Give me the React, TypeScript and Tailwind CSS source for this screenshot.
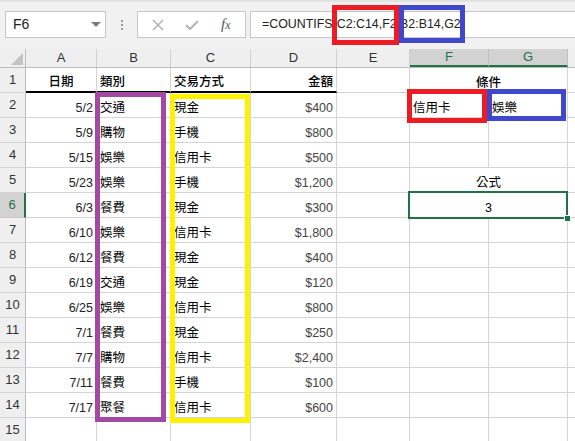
const font = "font-['Liberation_Sans','Noto_Sans_CJK_TC',sans-serif]";

const data = [
  ["5/2", "交通", "現金", "$400"],
  ["5/9", "購物", "手機", "$800"],
  ["5/15", "娛樂", "信用卡", "$500"],
  ["5/23", "娛樂", "手機", "$1,200"],
  ["6/3", "餐費", "現金", "$300"],
  ["6/10", "娛樂", "信用卡", "$1,800"],
  ["6/12", "餐費", "現金", "$400"],
  ["6/19", "交通", "現金", "$120"],
  ["6/25", "娛樂", "信用卡", "$800"],
  ["7/1", "餐費", "現金", "$250"],
  ["7/7", "購物", "信用卡", "$2,400"],
  ["7/11", "餐費", "手機", "$100"],
  ["7/17", "聚餐", "信用卡", "$600"],
];

const cols = [
  { key: "A", w: "w-[71px]" },
  { key: "B", w: "w-[74px]" },
  { key: "C", w: "w-[80px]" },
  { key: "D", w: "w-[86px]" },
  { key: "E", w: "w-[73px]" },
  { key: "F", w: "w-[79px]" },
  { key: "G", w: "w-[79px]" },
];

const cell = "h-[25px] shrink-0 border-r border-b border-[#d4d4d4] flex items-end pb-[3px] px-[3px] leading-none text-[12.5px] whitespace-nowrap";

function RowHead({ n, active }: { n: number; active?: boolean }) {
  return (
    <div
      className={
        active
          ? "h-[25px] w-[26px] shrink-0 bg-[#d2d2d2] border-r-2 border-r-[#217346] border-b border-b-[#c8c8c8] flex items-center justify-center text-[13px] text-[#217346]"
          : "h-[25px] w-[26px] shrink-0 bg-[#efefef] border-r border-r-[#bdbdbd] border-b border-b-[#d4d4d4] flex items-center justify-center text-[13px] text-[#333]"
      }
    >
      {n}
    </div>
  );
}

function FG({ f, g, merged }: { f?: string; g?: string; merged?: boolean }) {
  if (merged) {
    return <div className={`${cell} w-[158px] justify-center`}>{f}</div>;
  }
  return (
    <>
      <div className={`${cell} w-[79px]`}>{f}</div>
      <div className={`${cell} w-[79px]`}>{g}</div>
    </>
  );
}

export default function App() {
  return (
    <div className={`relative w-[575px] h-[441px] overflow-hidden bg-white text-black ${font}`}>
      {/* toolbar */}
      <div className="h-[49px] bg-[#f1f1f1] border-t-2 border-t-[#e2e2e2] pt-[9px] flex items-start">
        <div className="ml-[5px] w-[101px] h-[27px] bg-white border border-[#c6c6c6] flex items-center justify-between pl-[7px] pr-[4px] text-[14px] text-[#222]">
          <span>F6</span>
          <span className="w-0 h-0 border-l-[5px] border-r-[5px] border-t-[5px] border-l-transparent border-r-transparent border-t-[#7a7a7a]" />
        </div>
        <div className="w-[31px] h-[27px] flex flex-col items-center justify-center gap-[2px]">
          <span className="w-[2px] h-[2px] bg-[#9a9a9a]" />
          <span className="w-[2px] h-[2px] bg-[#9a9a9a]" />
          <span className="w-[2px] h-[2px] bg-[#9a9a9a]" />
        </div>
        <div className="w-[109px] h-[27px] bg-white border border-[#c6c6c6] flex items-center">
          <svg className="ml-[14px]" width="12" height="12" viewBox="0 0 12 12">
            <path d="M1 1 L11 11 M11 1 L1 11" stroke="#b4b4b4" strokeWidth="1.6" fill="none" />
          </svg>
          <svg className="ml-[21px]" width="14" height="12" viewBox="0 0 14 12">
            <path d="M1 6 L5 10 L13 2" stroke="#b4b4b4" strokeWidth="2" fill="none" />
          </svg>
          <span className="ml-[22px] text-[15px] italic text-[#555] font-['Liberation_Serif',serif]">
            f<span className="text-[12px]">x</span>
          </span>
        </div>
        <div className="ml-[4px] flex-1 h-[27px] bg-white border border-[#c6c6c6] border-r-0 flex items-center pl-[11px] text-[12.4px] text-[#222]">
          =COUNTIFS(C2:C14,F2,B2:B14,G2)
        </div>
      </div>

      {/* column headers */}
      <div className="flex h-[19px] bg-[#efefef] border-b border-[#bdbdbd]">
        <div className="w-[26px] shrink-0 border-r border-[#bdbdbd] relative">
          <svg className="absolute right-[2px] bottom-[2px]" width="12" height="12" viewBox="0 0 12 12">
            <path d="M12 0 L12 12 L0 12 Z" fill="#c4c4c4" />
          </svg>
        </div>
        {cols.map((c) => {
          const active = c.key === "F" || c.key === "G";
          return (
            <div
              key={c.key}
              className={
                active
                  ? `${c.w} shrink-0 bg-[#d2d2d2] border-r border-r-[#c0c0c0] border-b-2 border-b-[#217346] flex items-center justify-center text-[13px] text-[#217346]`
                  : `${c.w} shrink-0 border-r border-[#d0d0d0] flex items-center justify-center text-[13px] text-[#333]`
              }
            >
              {c.key}
            </div>
          );
        })}
        <div className="flex-1" />
      </div>

      {/* row 1 */}
      <div className="flex">
        <RowHead n={1} />
        <div className={`${cell} w-[71px] justify-center font-medium border-b-2 border-b-black`}>日期</div>
        <div className={`${cell} w-[74px] font-medium border-b-2 border-b-black`}>類別</div>
        <div className={`${cell} w-[80px] font-medium border-b-2 border-b-black`}>交易方式</div>
        <div className={`${cell} w-[86px] justify-end font-medium border-b-2 border-b-black`}>金額</div>
        <div className={`${cell} w-[73px]`} />
        <div className={`${cell} w-[158px] justify-center font-medium`}>條件</div>
        <div className={`${cell} flex-1 border-r-0`} />
      </div>

      {data.map((r, i) => {
        const n = i + 2;
        return (
          <div key={n} className="flex">
            <RowHead n={n} active={n === 6} />
            <div className={`${cell} w-[71px] justify-end text-[#222]`}>{r[0]}</div>
            <div className={`${cell} w-[74px]`}>{r[1]}</div>
            <div className={`${cell} w-[80px]`}>{r[2]}</div>
            <div className={`${cell} w-[86px] justify-end text-[#444]`}>{r[3]}</div>
            <div className={`${cell} w-[73px]`} />
            {n === 2 && <FG f="信用卡" g="娛樂" />}
            {n === 5 && <FG f="公式" merged />}
            {n === 6 && <FG f="3" merged />}
            {n !== 2 && n !== 5 && n !== 6 && <FG />}
            <div className={`${cell} flex-1 border-r-0`} />
          </div>
        );
      })}

      {/* row 15 */}
      <div className="flex">
        <RowHead n={15} />
        <div className={`${cell} w-[71px]`} />
        <div className={`${cell} w-[74px]`} />
        <div className={`${cell} w-[80px]`} />
        <div className={`${cell} w-[86px]`} />
        <div className={`${cell} w-[73px]`} />
        <FG />
        <div className={`${cell} flex-1 border-r-0`} />
      </div>

      {/* selection of F6:G6 */}
      <div className="absolute left-[408px] top-[191px] w-[160px] h-[28px] border-2 border-[#217346] pointer-events-none" />
      <div className="absolute left-[564px] top-[215px] w-[7px] h-[7px] bg-[#217346] border border-white pointer-events-none" />

      {/* annotation boxes */}
      <div className="absolute left-[332px] top-[5px] w-[67px] h-[40px] border-[5px] border-[#ed1c24] pointer-events-none" />
      <div className="absolute left-[399px] top-[5px] w-[66px] h-[38px] border-[5px] border-[#3f48cc] pointer-events-none" />
      <div className="absolute left-[407px] top-[89px] w-[80px] h-[34px] border-[5px] border-[#ed1c24] pointer-events-none" />
      <div className="absolute left-[487px] top-[89px] w-[79px] h-[32px] border-[5px] border-[#3f48cc] pointer-events-none" />
      <div className="absolute left-[95px] top-[92px] w-[71px] h-[330px] border-[5px] border-[#a349a4] pointer-events-none" />
      <div className="absolute left-[170px] top-[94px] w-[80px] h-[329px] border-[5px] border-[#fff200] pointer-events-none" />
    </div>
  );
}
